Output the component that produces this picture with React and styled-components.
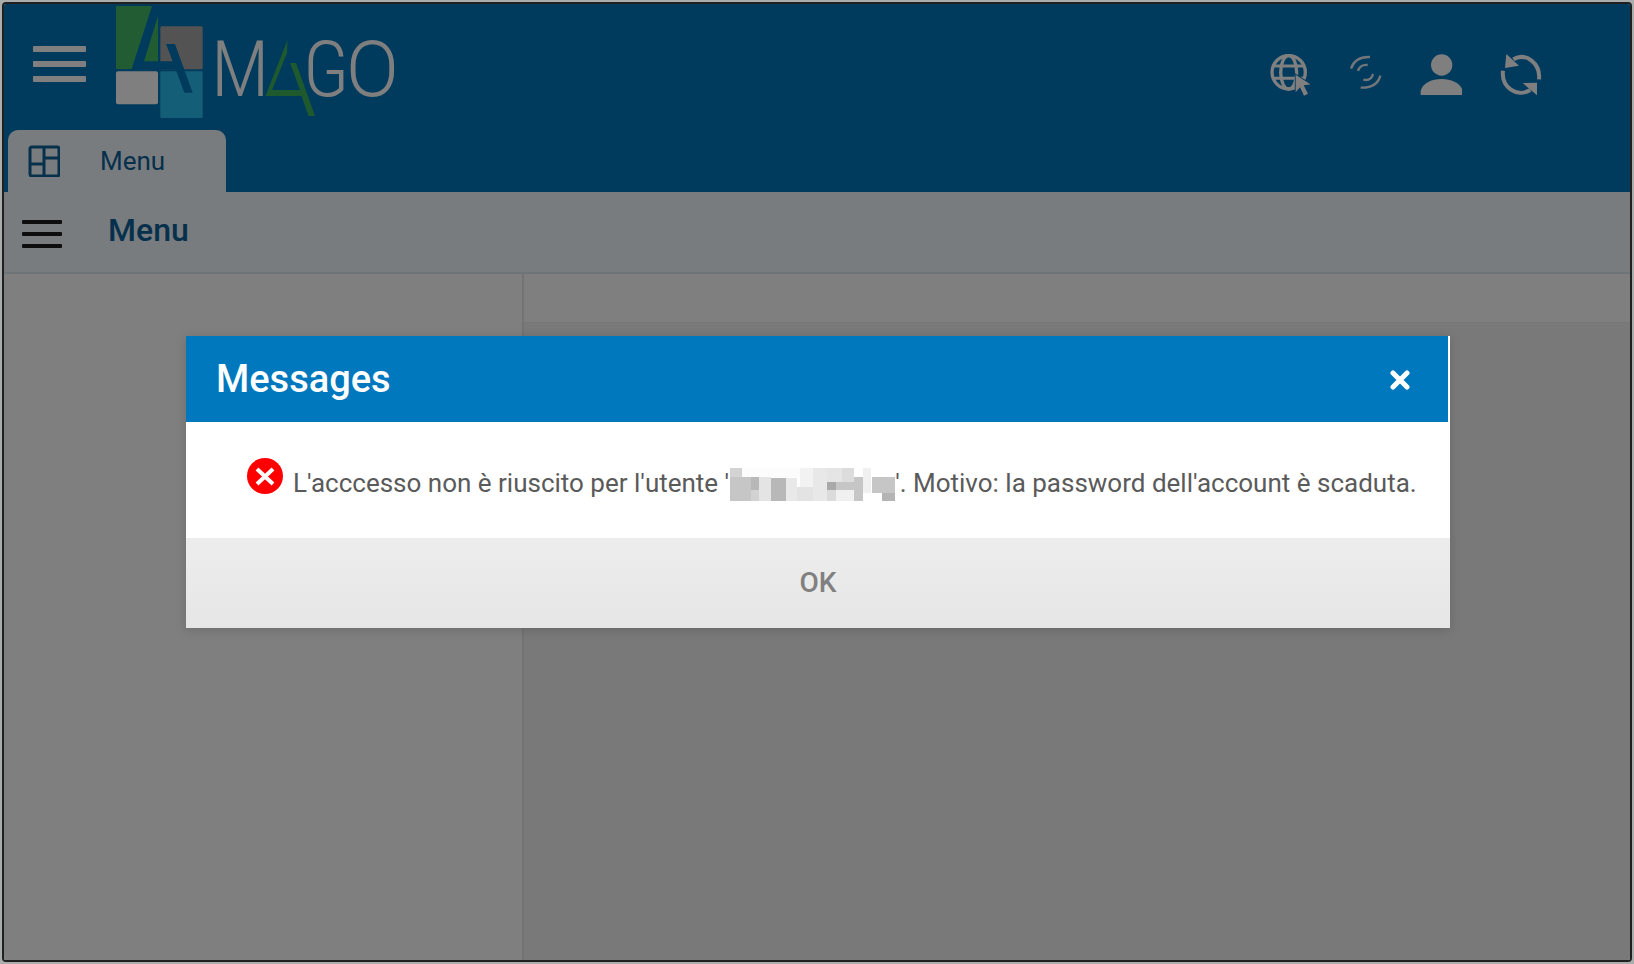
import React from 'react';
import styled, { createGlobalStyle } from 'styled-components';

const GlobalStyle = createGlobalStyle`
  * {
    box-sizing: border-box;
  }
  body {
    margin: 0;
    background: #a9adab;
    font-family: Roboto, 'Open Sans', sans-serif;
  }
  button {
    border: 0;
    padding: 0;
    background: none;
    font-family: inherit;
    cursor: pointer;
  }
  svg {
    display: block;
  }
`;

const Frame = styled.div`
  position: relative;
  display: flex;
  flex-direction: column;
  min-height: calc(100vh - 4px);
  margin: 2px;
  border: 2px solid #202020;
  border-radius: 4px;
  overflow: hidden;
`;

const Header = styled.header`
  background: #0076bc;
`;

const TopBar = styled.div`
  display: flex;
  align-items: flex-start;
  height: 126px;
  padding: 2px 88px 0 29px;
`;

const MainToggle = styled.button`
  margin: 40px 30px 0 0;
`;

const Brand = styled.a`
  display: flex;
  align-items: flex-start;
`;

const Actions = styled.nav`
  display: flex;
  align-items: center;
  gap: 38px;
  margin: 48px 0 0 auto;
`;

const Tabs = styled.div`
  display: flex;
  padding-left: 4px;
`;

const Tab = styled.button`
  display: flex;
  align-items: center;
  gap: 40px;
  width: 218px;
  height: 62px;
  padding-left: 20px;
  border-radius: 10px 10px 0 0;
  background: #f0f9ff;
  color: #0c6098;
  font-size: 26px;
  font-weight: 400;
`;

const Toolbar = styled.div`
  display: flex;
  align-items: center;
  gap: 46px;
  height: 82px;
  padding: 4px 18px 0;
  border-bottom: 2px solid #dce8f0;
  background: #f0f9ff;
`;

const ToolbarTitle = styled.h1`
  margin: 0 0 8px;
  color: #0c6098;
  font-size: 32px;
  line-height: 40px;
  font-weight: 500;
`;

const Content = styled.div`
  display: grid;
  grid-template-columns: 520px 1fr;
  flex: 1;
`;

const Sidebar = styled.aside`
  border-right: 2px solid #e6e6e6;
  background: #fff;
`;

const Main = styled.main`
  background: #f3f3f3;
`;

const MainBar = styled.div`
  height: 49px;
  border-bottom: 1px solid #ececec;
  background: #fff;
`;

const Backdrop = styled.div`
  position: absolute;
  inset: 0;
  display: flex;
  align-items: center;
  justify-content: center;
  padding-left: 2px;
  background: rgba(0, 0, 0, 0.5);
`;

const Dialog = styled.section`
  width: 1264px;
  max-width: 100%;
  background: #fff;
  box-shadow: 0 2px 10px rgba(0, 0, 0, 0.15);
`;

const DialogHeader = styled.div`
  display: flex;
  align-items: center;
  justify-content: space-between;
  height: 86px;
  margin-right: 2px;
  padding: 0 37px 0 30px;
  background: #0078be;
`;

const DialogTitle = styled.h2`
  margin: 0;
  color: #fff;
  font-size: 38px;
  line-height: 46px;
  font-weight: 500;
`;

const DialogBody = styled.div`
  display: flex;
  align-items: flex-start;
  gap: 10px;
  height: 116px;
  padding: 36px 0 0 61px;
`;

const Message = styled.p`
  display: flex;
  margin: 10px 0 0;
  color: #5a5a5a;
  font-size: 26px;
  line-height: 30px;
  white-space: pre;
`;

const DialogFooter = styled.div`
  background: linear-gradient(#ededed, #e6e6e6);
`;

const OkButton = styled.button`
  display: block;
  width: 100%;
  height: 90px;
  padding-bottom: 2px;
  color: #808080;
  font-size: 28px;
  font-weight: 500;
`;

const Bars = ({ width, step, thickness, color }) => (
  <svg width={width} height={step * 2 + thickness} fill={color}>
    {[0, 1, 2].map(i => (
      <rect key={i} y={i * step} width={width} height={thickness} rx="1" />
    ))}
  </svg>
);

const Logo = () => (
  <svg width="87" height="112" viewBox="348 18 261 336">
    <path fill="#42b964" d="M348 18h108l-61 189h-47zM474 48v136h-42z" />
    <rect x="481" y="79" width="127" height="129" rx="5" fill="#a6a6a6" />
    <rect x="348" y="214" width="126" height="99" rx="6" fill="#fff" />
    <rect x="481" y="214" width="127" height="140" rx="4" fill="#28bfee" />
    <path fill="#0076bc" d="M480 184h38l-20-52h27l53 146h-25l-26-70h-47z" />
  </svg>
);

const Letter = styled.text`
  fill: #fff;
  font-family: ${props => (props.$wide ? 'Roboto' : "'Roboto Condensed'")}, sans-serif;
  font-size: 78px;
  font-weight: 350;
`;

const Wordmark = () => (
  <svg width="214" height="124" viewBox="203 6 214 124">
    <Letter x="211" y="96">
      M
    </Letter>
    <path
      fill="#3cb45a"
      d="M287.500 40L265.500 96h36l7 20h6.500l-19-53h-6l10 27h-28l15-37z"
    />
    <Letter x="303" y="96">
      G
    </Letter>
    <Letter $wide x="346" y="96">
      O
    </Letter>
  </svg>
);

const GlobeIcon = () => (
  <svg width="40" height="42" viewBox="62 71 120 126">
    <g fill="none" stroke="#fff" strokeWidth="10">
      <circle cx="118" cy="126" r="50" />
      <ellipse cx="118" cy="126" rx="24" ry="50" />
      <path d="M70 107h96M70 144h96" strokeWidth="9" />
    </g>
    <path
      fill="#fff"
      stroke="#0076bc"
      strokeWidth="5"
      paintOrder="stroke"
      d="M139 133l44 29-20 3 13 25-12 6-12-25-13 15z"
    />
  </svg>
);

const SignalIcon = () => (
  <svg width="34" height="42" viewBox="296 71 102 126">
    <g fill="none" stroke="#e4edf4" strokeWidth="7">
      <path d="M305 115q12-37 57-35M326 122q6-20 29-18" />
      <path d="M393 136q-10 38-59 36M371 131q-5 22-29 17" />
    </g>
  </svg>
);

const UserIcon = () => (
  <svg width="42" height="42" viewBox="511 71 126 126" fill="#fff">
    <circle cx="576" cy="104" r="32" />
    <path d="M513 194v-12c4-22 32-36 63-36s59 14 63 36v12z" />
  </svg>
);

const SyncIcon = () => (
  <svg width="42" height="42" viewBox="750 71 126 126">
    <g fill="none" stroke="#fff" strokeWidth="12">
      <path d="M790 87c38-22 82 12 77 60M759 121c-6 50 42 82 82 58" />
    </g>
    <path fill="#fff" d="M769 71l38 35-42 7zM861 157v38l-43-37z" />
  </svg>
);

const GridIcon = () => (
  <svg width="32" height="32" fill="none" stroke="#0c6098" strokeWidth="3">
    <rect x="2" y="2" width="29" height="29" rx="2" />
    <path d="M16 1v30M1 19h15M16 13h15" />
  </svg>
);

const ErrorIcon = () => (
  <svg width="36" height="36">
    <circle cx="18" cy="18" r="18" fill="#f00" />
    <path d="M10 11l16 15M26 11L10 26" stroke="#fff" strokeWidth="4" />
  </svg>
);

// x, y, width, height, shade
const blocks = [
  [0, 0, 12, 9, '#d3d3d3'],
  [12, 0, 58, 9, '#fcfcfc'],
  [70, 0, 13, 19, '#f2f2f2'],
  [83, 0, 14, 33, '#e8e8e8'],
  [97, 0, 15, 14, '#e5e5e5'],
  [112, 0, 12, 14, '#dcdcdc'],
  [133, 0, 8, 25, '#f0f0f0'],
  [0, 9, 21, 24, '#c6c6c6'],
  [21, 9, 8, 13, '#b8b8b8'],
  [21, 22, 8, 11, '#d2d2d2'],
  [29, 9, 12, 24, '#e4e4e4'],
  [41, 10, 15, 23, '#b8b8b8'],
  [56, 10, 11, 23, '#e9e9e9'],
  [67, 19, 16, 14, '#e3e3e3'],
  [97, 14, 9, 8, '#a9a9a9'],
  [106, 14, 18, 8, '#c6c6c6'],
  [97, 22, 9, 11, '#dbdbdb'],
  [106, 22, 18, 11, '#f0f0f0'],
  [124, 9, 9, 24, '#c6c6c6'],
  [142, 9, 23, 16, '#c6c6c6'],
  [152, 25, 13, 8, '#b4b4b4'],
];

const HiddenName = () => (
  <svg width="166" height="33" viewBox="-1 0 166 33">
    {blocks.map(([x, y, width, height, fill]) => (
      <rect key={`${x}-${y}`} {...{ x, y, width, height, fill }} />
    ))}
  </svg>
);

const CloseIcon = () => (
  <svg width="22" height="22" stroke="#fff" strokeWidth="5" strokeLinecap="round">
    <path d="M4 5l14 14M18 5L4 19" />
  </svg>
);

export default function App() {
  const [open, setOpen] = React.useState(true);
  const close = () => setOpen(false);

  return (
    <>
      <GlobalStyle />
      <Frame>
        <Header>
          <TopBar>
            <MainToggle aria-label="Menu">
              <Bars width={53} step={15} thickness={6} color="#fff" />
            </MainToggle>
            <Brand href="#home">
              <Logo />
              <Wordmark />
            </Brand>
            <Actions>
              <button aria-label="Web">
                <GlobeIcon />
              </button>
              <button aria-label="Connection">
                <SignalIcon />
              </button>
              <button aria-label="User">
                <UserIcon />
              </button>
              <button aria-label="Refresh">
                <SyncIcon />
              </button>
            </Actions>
          </TopBar>
          <Tabs>
            <Tab>
              <GridIcon />
              Menu
            </Tab>
          </Tabs>
        </Header>
        <Toolbar>
          <button aria-label="Sidebar">
            <Bars width={40} step={12} thickness={4} color="#1c1c1c" />
          </button>
          <ToolbarTitle>Menu</ToolbarTitle>
        </Toolbar>
        <Content>
          <Sidebar />
          <Main>
            <MainBar />
          </Main>
        </Content>
        {open && (
          <Backdrop>
            <Dialog role="dialog" aria-labelledby="dialog-title">
              <DialogHeader>
                <DialogTitle id="dialog-title">Messages</DialogTitle>
                <button aria-label="Close" onClick={close}>
                  <CloseIcon />
                </button>
              </DialogHeader>
              <DialogBody>
                <ErrorIcon />
                <Message>
                  <span>L'acccesso non è riuscito per l'utente '</span>
                  <HiddenName />
                  <span>'. Motivo: la password dell'account è scaduta.</span>
                </Message>
              </DialogBody>
              <DialogFooter>
                <OkButton onClick={close}>OK</OkButton>
              </DialogFooter>
            </Dialog>
          </Backdrop>
        )}
      </Frame>
    </>
  );
}
